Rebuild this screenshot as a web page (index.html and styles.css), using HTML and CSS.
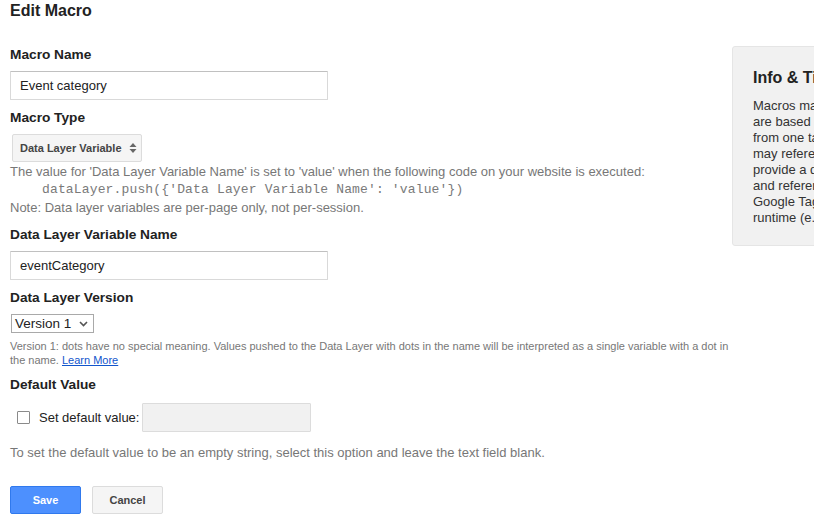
FILE: index.html
```html
<!DOCTYPE html>
<html>
<head>
<meta charset="utf-8">
<link rel="stylesheet" href="styles.css">
</head>
<body>
<div class="page">
  <div class="main">
    <h1 class="title">Edit Macro</h1>

    <div class="label first">Macro Name</div>
    <input class="text-input" type="text" value="Event category">

    <div class="label">Macro Type</div>
    <div class="type-select">
      <span>Data Layer Variable</span>
      <svg class="updown" width="8" height="12" viewBox="0 0 8 12"><path d="M0.5 5 L4 1 L7.5 5 Z M0.5 7 L4 11 L7.5 7 Z" fill="#666"/></svg>
    </div>
    <div class="help">
      <p>The value for 'Data Layer Variable Name' is set to 'value' when the following code on your website is executed:</p>
      <p class="code">dataLayer.push({'Data Layer Variable Name': 'value'})</p>
      <p>Note: Data layer variables are per-page only, not per-session.</p>
    </div>

    <div class="label">Data Layer Variable Name</div>
    <input class="text-input" type="text" value="eventCategory">

    <div class="label">Data Layer Version</div>
    <div class="version-select">
      <span>Version 1</span>
      <svg class="chev" width="9" height="6" viewBox="0 0 9 6"><path d="M1 1 L4.5 4.5 L8 1" fill="none" stroke="#555" stroke-width="1.6"/></svg>
    </div>
    <p class="small">Version 1: dots have no special meaning. Values pushed to the Data Layer with dots in the name will be interpreted as a single variable with a dot in the name. <a href="#">Learn More</a></p>

    <div class="label">Default Value</div>
    <div class="default-row">
      <span class="checkbox"></span>
      <span class="default-text">Set default value:</span>
      <input class="text-input disabled" type="text" disabled>
    </div>
    <p class="hint">To set the default value to be an empty string, select this option and leave the text field blank.</p>

    <div class="buttons">
      <button class="btn primary">Save</button>
      <button class="btn">Cancel</button>
    </div>
  </div>

  <div class="info">
    <h2 class="info-title">Info &amp; Tips</h2>
    <p class="info-text">Macros may be set from data on the page.<br>are based on values that change<br>from one tag to another. Tags<br>may reference macros to<br>provide a dynamic value<br>and reference them in<br>Google Tag Manager at<br>runtime (e.g. page URL).</p>
  </div>
</div>
</body>
</html>
```

FILE: styles.css
```css
html, body {
  margin: 0;
  padding: 0;
  background: #fff;
}
body {
  width: 814px;
  height: 526px;
  overflow: hidden;
  font-family: "Liberation Sans", Arial, sans-serif;
  color: #222;
}
.page {
  display: flex;
  align-items: flex-start;
  padding-left: 10px;
}
.main {
  flex: none;
  width: 720px;
}
.title {
  margin: 0;
  font-size: 16px;
  line-height: 22px;
  font-weight: bold;
  color: #222;
}
.label {
  font-size: 13.7px;
  font-weight: bold;
  line-height: 18px;
  margin: 9px 0 7px;
  color: #222;
}
.label.first {
  margin-top: 24px;
}
.text-input {
  display: block;
  box-sizing: border-box;
  width: 318px;
  height: 29px;
  margin: 0;
  padding: 0 9px;
  border: 1px solid #d9d9d9;
  border-top-color: #c0c0c0;
  border-radius: 1px;
  font-family: "Liberation Sans", Arial, sans-serif;
  font-size: 13px;
  color: #222;
  background: #fff;
  outline: none;
}
.type-select {
  box-sizing: border-box;
  display: flex;
  align-items: center;
  width: 130px;
  height: 28px;
  margin-left: 2px;
  padding: 0 0 0 7px;
  gap: 7px;
  background: #f5f5f5;
  border: 1px solid #dcdcdc;
  border-radius: 2px;
  font-size: 11px;
  font-weight: bold;
  color: #444;
}
.updown {
  display: block;
}
.help {
  font-size: 13px;
  line-height: 18px;
  color: #777;
  margin-top: 1px;
}
.help p {
  margin: 0;
}
.help .code {
  font-family: "Liberation Mono", "Courier New", monospace;
  padding-left: 32px;
  letter-spacing: 0.15px;
  color: #7a7a7a;
}
.version-select {
  box-sizing: border-box;
  display: flex;
  align-items: center;
  width: 83px;
  height: 19px;
  margin-left: 1px;
  padding: 0 0 0 3px;
  border: 1px solid #a9a9a9;
  background: #fff;
  font-size: 13.5px;
  color: #222;
}
.version-select span {
  flex: 1;
}
.chev {
  display: block;
  margin-right: 5px;
}
.small {
  margin: 6px 0 0;
  font-size: 11px;
  line-height: 14px;
  color: #777;
}
.small a {
  color: #15c;
  text-decoration: underline;
}
.default-row {
  display: flex;
  align-items: center;
  margin-top: 9px;
}
.checkbox {
  box-sizing: border-box;
  width: 13px;
  height: 13px;
  margin-left: 7px;
  border: 1px solid #8a8a8a;
  border-radius: 1px;
  background: #fff;
}
.default-text {
  margin-left: 9px;
  margin-right: 3px;
  font-size: 13px;
  color: #222;
}
.text-input.disabled {
  width: 169px;
  height: 29px;
  background: #f1f1f1;
  border-color: #dcdcdc;
}
.hint {
  margin: 12px 0 0;
  font-size: 13px;
  line-height: 18px;
  color: #777;
}
.buttons {
  display: flex;
  gap: 11px;
  margin-top: 24px;
}
.btn {
  box-sizing: border-box;
  width: 71px;
  height: 28px;
  margin: 0;
  padding: 0;
  border: 1px solid #dcdcdc;
  border-radius: 2px;
  background: #f5f5f5;
  color: #444;
  font-family: "Liberation Sans", Arial, sans-serif;
  font-size: 11px;
  font-weight: bold;
}
.btn.primary {
  background: #4d90fe;
  border-color: #3079ed;
  color: #fff;
}
.info {
  flex: none;
  box-sizing: border-box;
  width: 300px;
  height: 200px;
  margin-top: 46px;
  margin-left: 2px;
  padding: 21px 20px 0 20px;
  background: #f1f1f1;
  border: 1px solid #e5e5e5;
  border-radius: 3px;
}
.info-title {
  margin: 0;
  font-size: 16px;
  line-height: 20px;
  font-weight: bold;
  color: #222;
}
.info-text {
  margin: 10px 0 0;
  font-size: 13px;
  line-height: 16px;
  color: #333;
  white-space: nowrap;
}
```
